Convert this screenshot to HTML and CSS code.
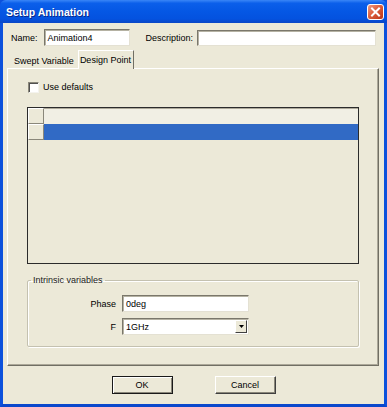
FILE: index.html
```html
<!DOCTYPE html>
<html>
<head>
<meta charset="utf-8">
<title>Setup Animation</title>
<link rel="stylesheet" href="styles.css">
</head>
<body>
<div class="window">
  <div class="titlebar">
    <span class="title">Setup Animation</span>
    <span class="close">
      <svg width="17" height="16" viewBox="0 0 17 16">
        <defs>
          <linearGradient id="cg" x1="0" y1="0" x2="1" y2="1">
            <stop offset="0" stop-color="#f0a08a"/>
            <stop offset="0.45" stop-color="#dd5f3d"/>
            <stop offset="1" stop-color="#b83214"/>
          </linearGradient>
        </defs>
        <rect x="0.5" y="0.5" width="16" height="15" rx="2.5" fill="url(#cg)" stroke="#ffffff"/>
        <path d="M5 4.5 L12 11.5 M12 4.5 L5 11.5" stroke="#ffffff" stroke-width="2" stroke-linecap="square"/>
      </svg>
    </span>
  </div>
  <div class="frame">
    <div class="name-row">
      <span class="lbl">Name:</span>
      <div class="field name-field">Animation4</div>
      <span class="lbl desc-lbl">Description:</span>
      <div class="field desc-field"></div>
    </div>
    <div class="tabs">
      <div class="tab">Swept Variable</div>
      <div class="tab active">Design Point</div>
    </div>
    <div class="panel">
      <div class="check-row">
        <span class="checkbox"></span>
        <span>Use defaults</span>
      </div>
      <div class="grid">
        <div class="grow hdr">
          <div class="rh"></div>
          <div class="cells"></div>
        </div>
        <div class="grow sel">
          <div class="rh"></div>
          <div class="cells"></div>
        </div>
      </div>
      <fieldset class="group">
        <legend>Intrinsic variables</legend>
        <div class="form">
          <span class="flabel">Phase</span>
          <div class="field">0deg</div>
          <span class="flabel">F</span>
          <div class="field select">
            <span>1GHz</span>
            <span class="drop">
              <svg width="5" height="3" viewBox="0 0 5 3"><path d="M0 0 H5 L2.5 3 Z" fill="#000"/></svg>
            </span>
          </div>
        </div>
      </fieldset>
    </div>
    <div class="buttons">
      <div class="btn default">OK</div>
      <div class="btn">Cancel</div>
    </div>
  </div>
</div>
</body>
</html>
```
FILE: styles.css
```css
* { box-sizing: border-box; }
html, body {
  margin: 0;
  padding: 0;
  width: 387px;
  height: 407px;
  overflow: hidden;
  background: #ECE9D8;
}
body {
  font-family: "Liberation Sans", Arial, sans-serif;
  font-size: 9px;
  color: #000;
}
.window {
  width: 387px;
  height: 407px;
  display: flex;
  flex-direction: column;
  background: #0c51dc;
}
.titlebar {
  height: 23px;
  flex: none;
  display: flex;
  align-items: center;
  justify-content: space-between;
  padding: 0 3px 0 6px;
  border-radius: 6px 6px 0 0;
  background: linear-gradient(to bottom, #3a86f7 0%, #0b5fea 14%, #0557e4 50%, #0452df 82%, #0a47c6 100%);
}
.title {
  color: #fff;
  font-weight: bold;
  font-size: 10.5px;
  text-shadow: 1px 1px 0 #0a2a8a;
}
.close {
  display: flex;
  margin-top: 1px;
}
.frame {
  flex: 1;
  display: flex;
  flex-direction: column;
  background: #ECE9D8;
  border-left: 3px solid #0c51dc;
  border-right: 3px solid #0c51dc;
  border-bottom: 3px solid #0a48cc;
  padding: 6px 0 10px;
}
.name-row {
  height: 17px;
  display: flex;
  align-items: center;
  padding: 0 8px;
}
.lbl { white-space: nowrap; }
.field {
  height: 17px;
  background: #fff;
  border-top: 1px solid #7a776b;
  border-left: 1px solid #7a776b;
  border-right: 1px solid #e4e1d3;
  border-bottom: 1px solid #e4e1d3;
  box-shadow: inset 1px 1px 0 #b5b2a3;
  padding: 0 3px;
  display: flex;
  align-items: center;
  white-space: nowrap;
}
.name-field {
  width: 86px;
  margin-left: 6px;
}
.desc-lbl { margin-left: 16px; }
.desc-field {
  flex: 1;
  margin-left: 4px;
  height: 16px;
}
.tabs {
  margin-top: 4px;
  height: 18px;
  display: flex;
  align-items: flex-end;
  padding-left: 6px;
  position: relative;
  z-index: 1;
}
.tab {
  height: 15px;
  padding: 0 4px 0 5px;
  display: flex;
  align-items: center;
  white-space: nowrap;
}
.tab.active {
  height: 19px;
  margin-bottom: -1px;
  padding: 0 2px 1px 1px;
  background: #ECE9D8;
  border-top: 1px solid #fff;
  border-left: 1px solid #fff;
  border-right: 1px solid #716f64;
}
.panel {
  height: 298px;
  margin: 0 5px 0 4px;
  border-top: 1px solid #fff;
  border-left: 1px solid #fff;
  border-right: 1px solid #716f64;
  border-bottom: 1px solid #716f64;
  box-shadow: inset -1px -1px 0 #aca899;
  padding: 12px 19px 0;
  display: flex;
  flex-direction: column;
}
.check-row {
  height: 12px;
  display: flex;
  align-items: center;
  gap: 4px;
  padding-left: 1px;
}
.checkbox {
  width: 11px;
  height: 11px;
  background: #fff;
  border-top: 1px solid #8a877a;
  border-left: 1px solid #8a877a;
  border-right: 1px solid #f4f3ee;
  border-bottom: 1px solid #f4f3ee;
  box-shadow: inset 1px 1px 0 #505050;
}
.grid {
  margin-top: 14px;
  height: 157px;
  border: 1px solid #2b2b2b;
  background: #ECE9D8;
  display: flex;
  flex-direction: column;
}
.grow {
  height: 16px;
  display: flex;
}
.rh {
  width: 16px;
  background: #ECE9D8;
  border-top: 1px solid #fff;
  border-left: 1px solid #fff;
  border-right: 1px solid #8a877a;
  border-bottom: 1px solid #8a877a;
}
.cells { flex: 1; }
.hdr .cells {
  border-top: 1px solid #aca899;
  background: #f1efe4;
}
.sel .cells { background: #316AC5; }
.group {
  margin: 11px 0 0;
  padding: 9px 0 11px;
  border: 1px solid #c4c1b0;
  box-shadow: inset 1px 1px 0 #fff, 1px 1px 0 #fff;
  border-radius: 2px;
}
.group legend {
  margin-left: 3px;
  padding: 0 2px;
  line-height: 11px;
  color: #222;
}
.form {
  display: grid;
  grid-template-columns: 60px 127px;
  column-gap: 6px;
  row-gap: 6px;
  margin-left: 28px;
  align-items: center;
}
.flabel { text-align: right; }
.select {
  justify-content: space-between;
  padding-right: 1px;
}
.drop {
  width: 12px;
  height: 13px;
  background: #ECE9D8;
  border-top: 1px solid #fff;
  border-left: 1px solid #fff;
  border-right: 1px solid #404040;
  border-bottom: 1px solid #404040;
  display: flex;
  align-items: center;
  justify-content: center;
}
.buttons {
  margin-top: 10px;
  height: 18px;
  display: flex;
  justify-content: center;
  gap: 42px;
}
.btn {
  width: 61px;
  height: 18px;
  display: flex;
  align-items: center;
  justify-content: center;
  background: #ECE9D8;
  border-top: 1px solid #fff;
  border-left: 1px solid #fff;
  border-right: 1px solid #404040;
  border-bottom: 1px solid #404040;
  box-shadow: inset -1px -1px 0 #8a877a;
}
.btn.default {
  border: 1px solid #1a1a1a;
  box-shadow: inset 1px 1px 0 #fff, inset -1px -1px 0 #8a877a;
}
```
